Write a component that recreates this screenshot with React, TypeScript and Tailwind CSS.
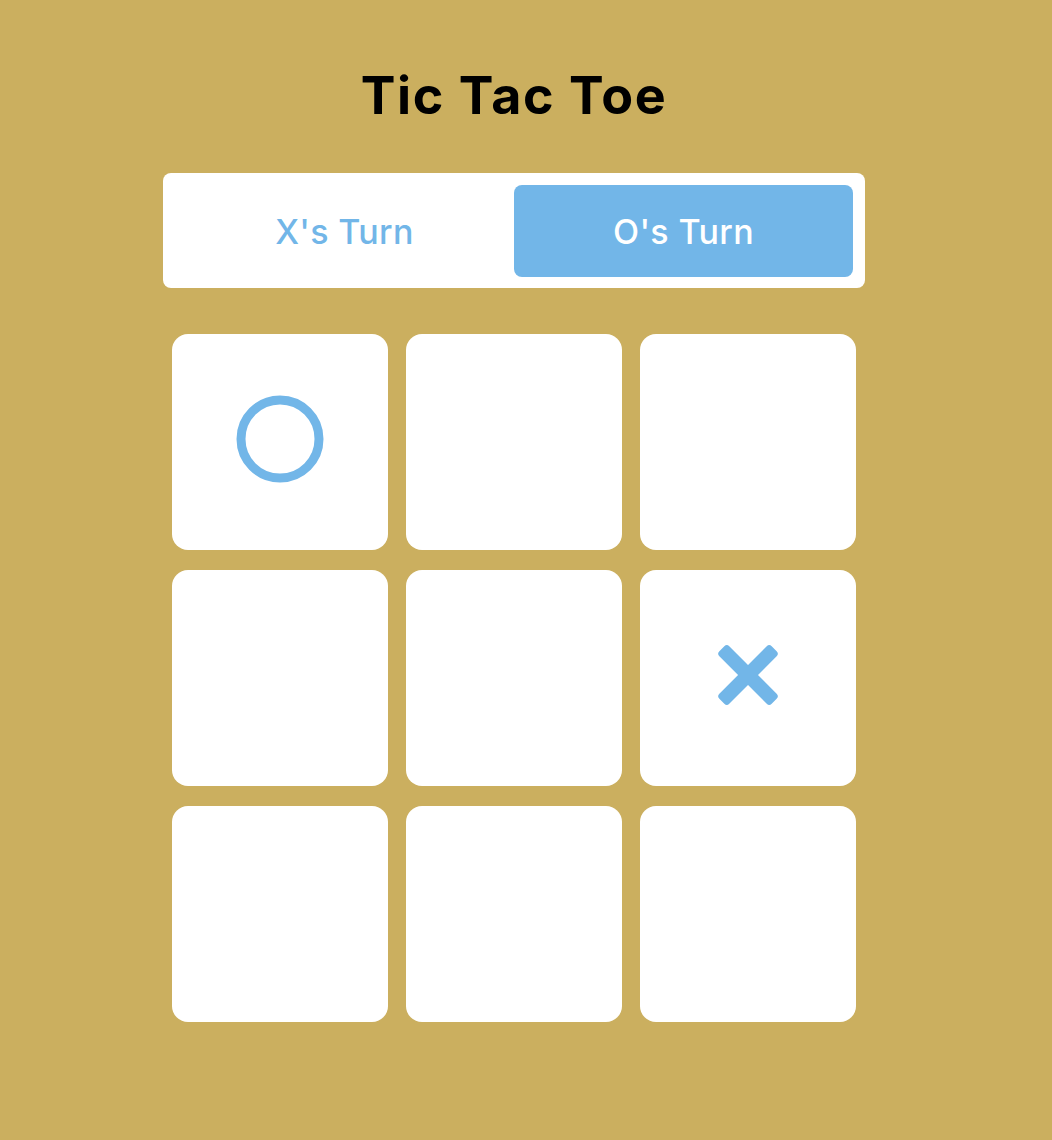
const cells: ("X" | "O" | null)[] = ["O", null, null, null, null, "X", null, null, null];

const OMark = () => (
  <svg width="88" height="88" viewBox="0 0 88 88" className="mb-[6px]">
    <circle cx="44" cy="44" r="39" fill="none" stroke="#72B6E8" strokeWidth="9" />
  </svg>
);

const XMark = () => (
  <svg width="62" height="62" viewBox="0 0 62 62" className="mb-[6px]">
    <rect x="-6" y="24" width="74" height="14" rx="3.5" fill="#72B6E8" transform="rotate(45 31 31)" />
    <rect x="-6" y="24" width="74" height="14" rx="3.5" fill="#72B6E8" transform="rotate(-45 31 31)" />
  </svg>
);

export default function App() {
  return (
    <div
      className="min-h-[1140px] bg-[#CBAF5F] flex justify-center pr-6"
      style={{ fontFamily: "Inter, 'Noto Sans', sans-serif" }}
    >
      <div className="w-[702px] flex flex-col items-center">
        <h1 className="pt-[70px] mb-[51px] text-[52px] leading-none font-bold text-black tracking-[0.03em]">
          Tic Tac Toe
        </h1>

        <div className="w-full bg-white rounded-lg pt-3 px-3 pb-[11px] flex">
          <button className="flex-1 h-[92px] flex items-center justify-center text-[34px] font-medium text-[#72B6E8] tracking-[0.01em]">
            X's Turn
          </button>
          <button className="flex-1 h-[92px] flex items-center justify-center rounded-lg bg-[#72B6E8] text-[34px] font-medium text-white tracking-[0.01em]">
            O's Turn
          </button>
        </div>

        <div className="mt-[46px] grid grid-cols-[repeat(3,216px)] gap-x-[18px] gap-y-5">
          {cells.map((c, i) => (
            <div key={i} className="h-[216px] bg-white rounded-2xl flex items-center justify-center">
              {c === "O" && <OMark />}
              {c === "X" && <XMark />}
            </div>
          ))}
        </div>
      </div>
    </div>
  );
}
